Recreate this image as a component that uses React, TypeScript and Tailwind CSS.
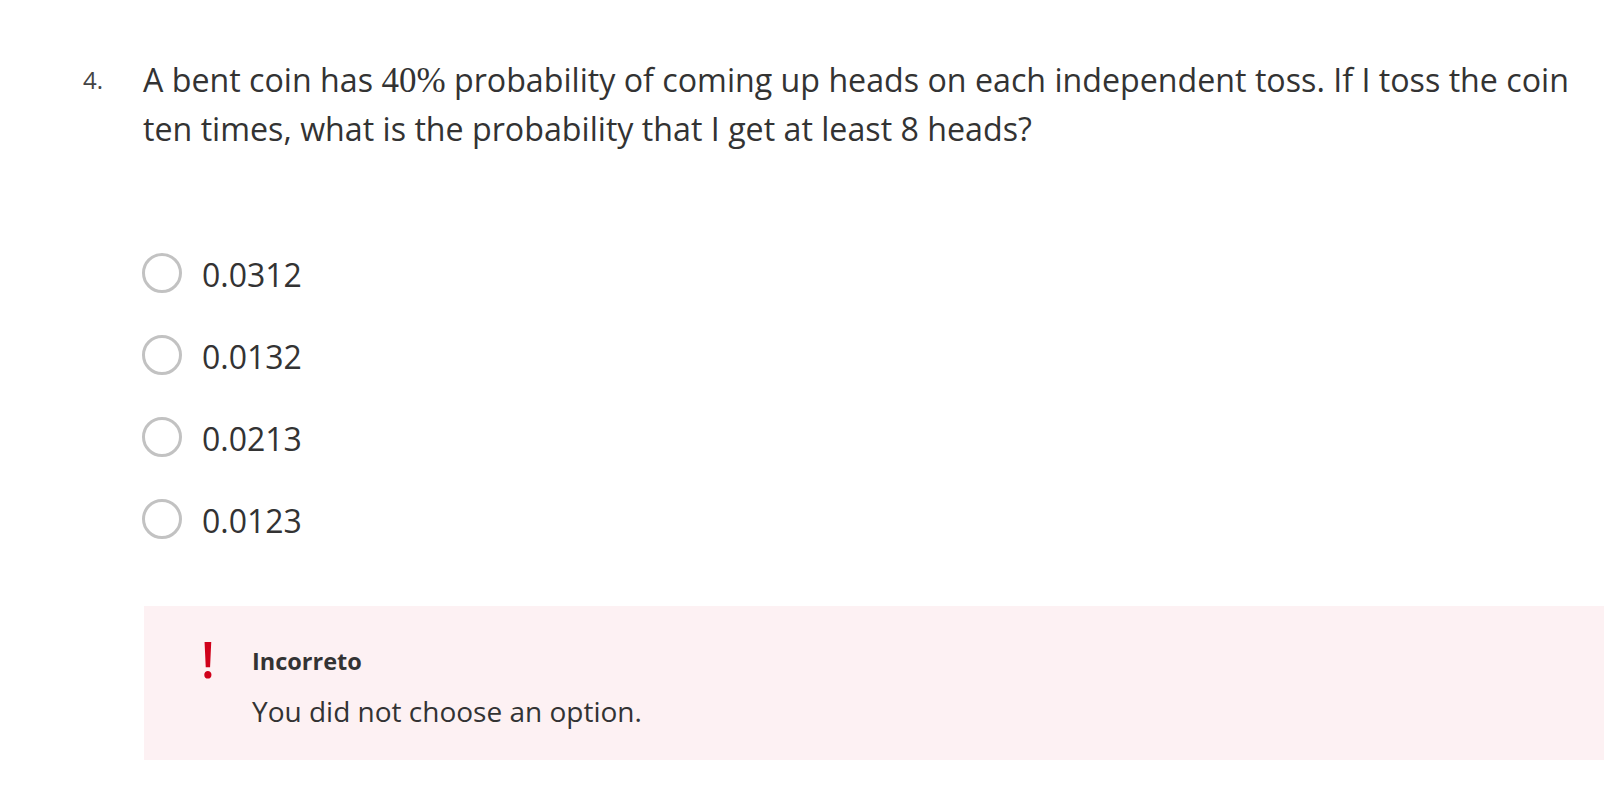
const options = ['0.0312', '0.0132', '0.0213', '0.0123'];

function Radio() {
  return <span className="block w-[40px] h-[40px] rounded-full border-[3px] border-[#c2c2c2] bg-white shrink-0" />;
}

export default function App() {
  return (
    <div
      className="min-h-[800px] bg-white text-[#333333] pt-[55px] pl-[83px]"
      style={{ fontFamily: '"Open Sans", sans-serif' }}
    >
      <div className="flex">
        <div className="w-[60px] shrink-0 text-[24px] leading-[49px] text-[#444]">4.</div>
        <div className="w-[1440px]">
          <p className="text-[32.2px] leading-[49px]">
            A bent coin has{' '}
            <span className="inline-block text-[35px] leading-[30px]" style={{ fontFamily: '"Liberation Serif", serif' }}>
              40%
            </span>{' '}
            probability of coming up heads on each independent toss. If I toss the coin ten times, what is the
            probability that I get at least 8 heads?
          </p>
        </div>
      </div>

      <div className="ml-[59px] mt-[100px] flex flex-col gap-[42px]">
        {options.map((o) => (
          <label key={o} className="flex items-center gap-[20px] h-[40px]">
            <Radio />
            <span className="text-[32px] leading-[40px] pt-[4px]">{o}</span>
          </label>
        ))}
      </div>

      <div className="ml-[61px] mt-[67px] w-[1460px] h-[154px] bg-[#fdf1f3] flex pl-[57px]">
        <div className="w-[51px] shrink-0 pt-[28px]">
          <span className="block text-[#d0021b] font-semibold text-[50px] leading-[50px]">!</span>
        </div>
        <div className="pt-[38px]">
          <div className="font-bold text-[23.5px] leading-[34px]">Incorreto</div>
          <div className="text-[28px] leading-[40px] mt-[13px]">You did not choose an option.</div>
        </div>
      </div>
    </div>
  );
}
